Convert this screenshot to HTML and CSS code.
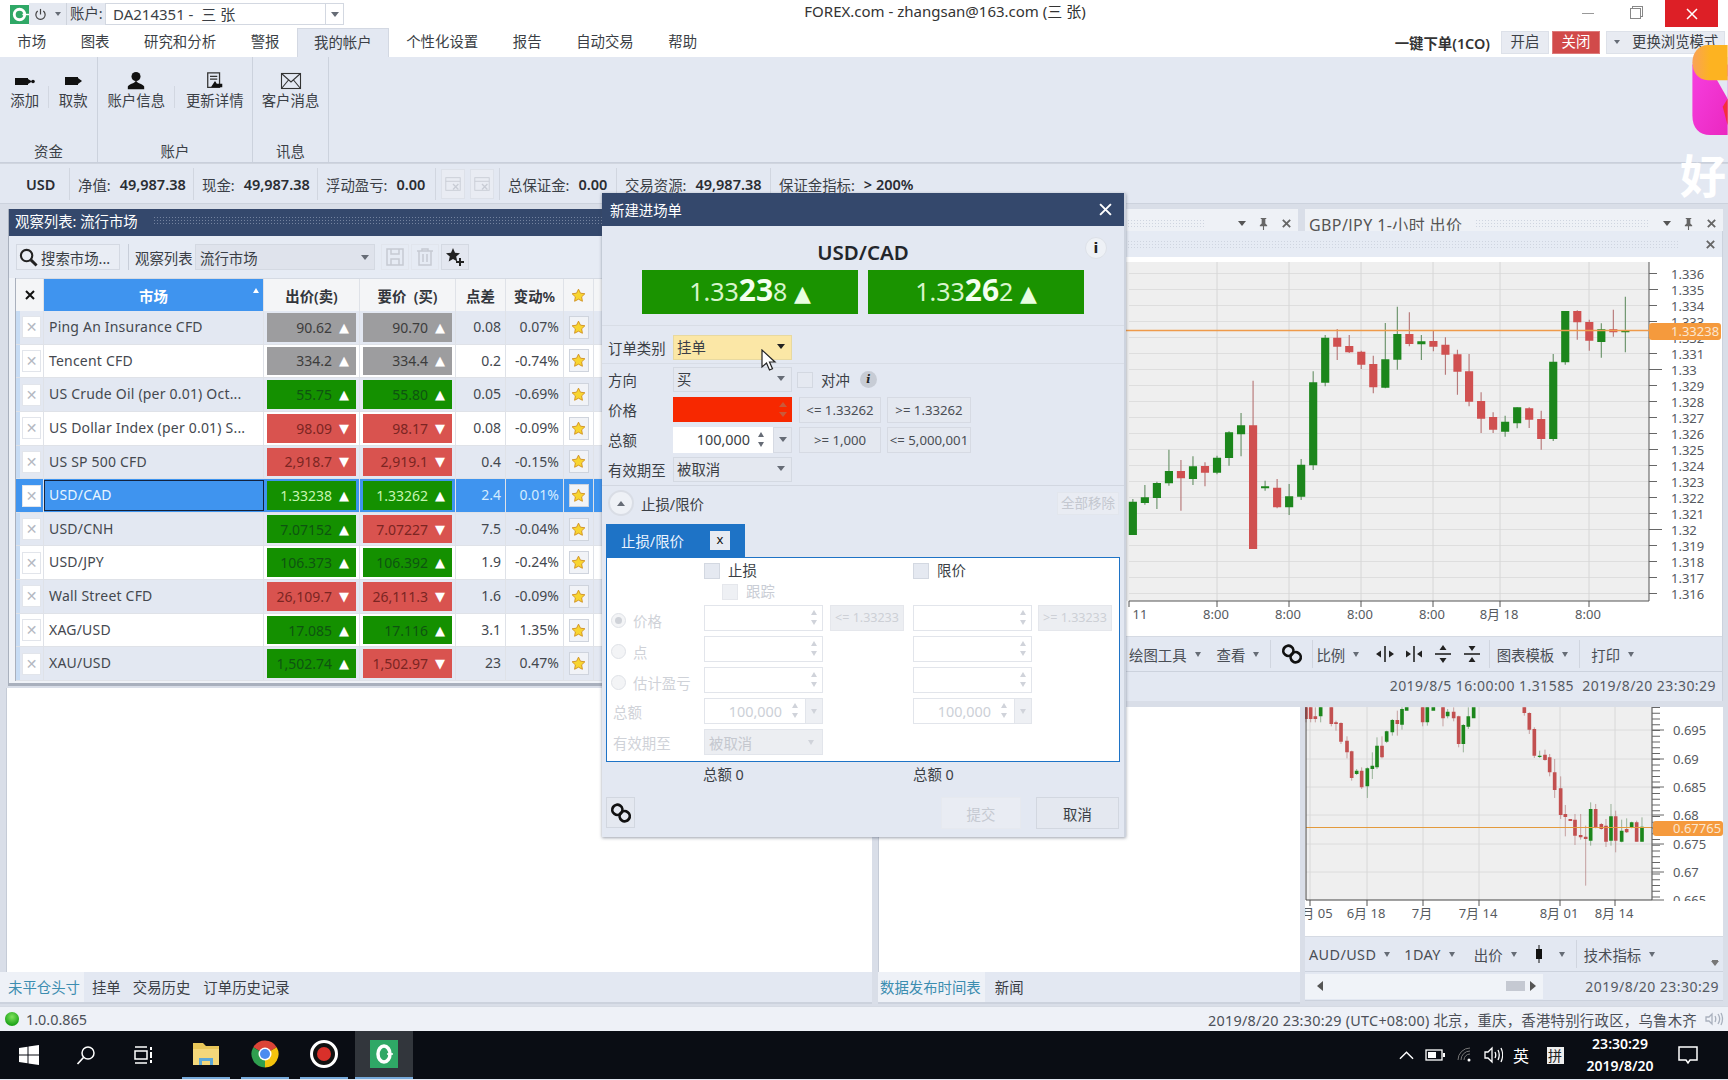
FILE: index.html
```html
<!DOCTYPE html>
<html lang="zh-CN">
<head>
<meta charset="utf-8">
<title>FOREX.com</title>
<link rel="stylesheet" href="styles.css">
</head>
<body>
<svg class="sprite" aria-hidden="true">
  <defs>
    <symbol id="i-star" viewBox="0 0 20 20"><path d="M10 1.5l2.6 5.4 5.9.8-4.3 4.1 1 5.9L10 14.9l-5.2 2.8 1-5.9L1.5 7.7l5.9-.8z"/></symbol>
    <symbol id="i-x" viewBox="0 0 12 12"><path d="M2 2l8 8M10 2l-8 8" fill="none" stroke="currentColor" stroke-width="2"/></symbol>
    <symbol id="i-link" viewBox="0 0 24 24"><g fill="none" stroke="currentColor" stroke-width="3"><rect x="2.5" y="3" width="11" height="11" rx="5.5" transform="rotate(35 8 8.5)"/><rect x="10.5" y="10" width="11" height="11" rx="5.5" transform="rotate(35 16 15.5)"/></g></symbol>
    <symbol id="i-pin" viewBox="0 0 12 14"><path d="M3 1h6v1H8v5l2 2v1H6.6v4H5.4v-4H2V9l2-2V2H3z"/></symbol>
    <symbol id="i-hsq" viewBox="0 0 20 20"><path d="M10 2v16" stroke="currentColor" stroke-width="1.6"/><path d="M1 10l5-3.5v7zM19 10l-5-3.5v7z"/></symbol>
    <symbol id="i-hex" viewBox="0 0 20 20"><path d="M10 2v16" stroke="currentColor" stroke-width="1.6"/><path d="M7 10L2 6.500v7zM13 10l5-3.500v7z"/></symbol>
    <symbol id="i-vsq" viewBox="0 0 20 20"><path d="M2 10h16" stroke="currentColor" stroke-width="1.6"/><path d="M10 1l3.500 5h-7zM10 19l3.500-5h-7z"/></symbol>
    <symbol id="i-vex" viewBox="0 0 20 20"><path d="M2 10h16" stroke="currentColor" stroke-width="1.6"/><path d="M10 7L6.500 2h7zM10 13l3.500 5h-7z"/></symbol>
    <symbol id="i-tray" viewBox="0 0 20 20"><g fill="none" stroke="currentColor" stroke-width="1"><rect x="2" y="3" width="16" height="14"/><path d="M2 7h16"/></g><path d="M10 10l6 6M16 10l-6 6" stroke="currentColor" stroke-width="1.500"/></symbol>
  </defs>
</svg>

<div class="app">

  <header class="titlebar">
    <div class="tb-left">
      <svg class="logo" viewBox="0 0 20 20"><rect width="20" height="20" fill="#2fa866"/><circle cx="10" cy="10" r="5.500" fill="none" stroke="#fff" stroke-width="3"/><path d="M13 10h7" stroke="#fff" stroke-width="1.500"/></svg>
      <div class="power">
        <svg class="power-i" viewBox="0 0 14 14"><path d="M7 1v6" stroke="#444" stroke-width="1.300"/><path d="M4 3.300a5 5 0 1 0 6 0" fill="none" stroke="#444" stroke-width="1.300"/></svg>
        <i class="caret"></i>
      </div>
      <span class="acct-label">账户:</span>
      <div class="acct-input"><span>DA214351 -&nbsp; 三 张</span><b class="acct-drop"><i class="caret"></i></b></div>
    </div>
    <div class="tb-title">FOREX.com - zhangsan@163.com (三 张)</div>
    <div class="tb-win">
      <span class="win-min"></span>
      <span class="win-max"></span>
      <span class="win-close"><svg viewBox="0 0 12 12"><path d="M1 1l10 10M11 1L1 11" stroke="#fff" stroke-width="1.500"/></svg></span>
    </div>
  </header>

  <nav class="rtabs">
    <a class="rtab">市场</a><a class="rtab">图表</a><a class="rtab">研究和分析</a><a class="rtab">警报</a><a class="rtab active">我的帐户</a><a class="rtab">个性化设置</a><a class="rtab">报告</a><a class="rtab">自动交易</a><a class="rtab">帮助</a>
    <div class="oneclick">
      <strong>一键下单(1CO)</strong>
      <button class="oc-btn">开启</button>
      <button class="oc-btn oc-off">关闭</button>
      <button class="oc-btn oc-mode"><i class="caret"></i><span>更换浏览模式</span></button>
    </div>
  </nav>

  <section class="ribbon">
    <div class="rgroup g1">
      <div class="rbtns">
        <div class="rbtn w50 sep">
          <svg class="ricon" viewBox="0 0 24 20"><rect x="2" y="7" width="13" height="7" fill="#111"/><path d="M15 8l4 2.500-4 2.500z" fill="#111"/><circle cx="20" cy="10.500" r="1.800" fill="#111"/></svg>
          <span>添加</span>
        </div>
        <div class="rbtn w48">
          <svg class="ricon" viewBox="0 0 24 20"><rect x="4" y="6" width="13" height="8" fill="#111"/><path d="M17 7l4 3-4 3z" fill="#111"/></svg>
          <span>取款</span>
        </div>
      </div>
      <div class="rlabel">资金</div>
    </div>
    <div class="rgroup g2">
      <div class="rbtns">
        <div class="rbtn w77 sep">
          <svg class="ricon" viewBox="0 0 24 22"><circle cx="12" cy="6" r="5" fill="#111"/><path d="M12 10c-1 4-7 4-9 7v3h18v-3c-2-3-8-3-9-7z" fill="#111"/></svg>
          <span>账户信息</span>
        </div>
        <div class="rbtn w78">
          <svg class="ricon" viewBox="0 0 22 22"><g fill="none" stroke="#333" stroke-width="1.400"><path d="M3 2h13v16H3zM5.500 6h8M5.500 9h8"/></g><path d="M7 17l4-6 2 3h6v4H7z" fill="#111"/></svg>
          <span>更新详情</span>
        </div>
      </div>
      <div class="rlabel">账户</div>
    </div>
    <div class="rgroup g3">
      <div class="rbtns">
        <div class="rbtn w76">
          <svg class="ricon" viewBox="0 0 24 20"><g fill="none" stroke="#333" stroke-width="1.100"><rect x="2.500" y="2.500" width="19" height="15"/><path d="M2.500 2.500L12 11l9.500-8.500M2.500 17.500l7-8.500M21.500 17.500l-7-8.500"/></g></svg>
          <span>客户消息</span>
        </div>
      </div>
      <div class="rlabel">讯息</div>
    </div>
  </section>

  <section class="acct">
    <div class="acell c-usd"><b>USD</b></div>
    <div class="acell c-a"><span>净值:</span><b>49,987.38</b></div>
    <div class="acell c-b"><span>现金:</span><b>49,987.38</b></div>
    <div class="acell c-c"><span>浮动盈亏:</span><b>0.00</b></div>
    <div class="acell c-icons">
      <span class="ghost-btn"><svg><use href="#i-tray"/></svg></span>
      <span class="ghost-btn"><svg><use href="#i-tray"/></svg></span>
    </div>
    <div class="acell c-d"><span>总保证金:</span><b>0.00</b></div>
    <div class="acell c-e"><span>交易资源:</span><b>49,987.38</b></div>
    <div class="acell c-f"><span>保证金指标:</span><b>&gt; 200%</b></div>
  </section>

  <main class="main">
    <div class="col-left">
      <section class="watch">
        <div class="watch-title"><span>观察列表: 流行市场</span><i class="dots"></i></div>
        <div class="watch-tools">
          <button class="search-btn">
            <svg viewBox="0 0 20 20"><circle cx="8" cy="8" r="6" fill="none" stroke="#222" stroke-width="2.200"/><path d="M12.500 12.500l6 6" stroke="#222" stroke-width="3"/></svg>
            <span>搜索市场...</span>
          </button>
          <span class="tool-sep"></span>
          <span class="tool-label">观察列表</span>
          <div class="tool-combo"><span>流行市场</span><i class="caret"></i></div>
          <span class="tool-ic off"><svg viewBox="0 0 20 20"><g fill="none" stroke="#c6cad2" stroke-width="1.500"><path d="M2 2h16v16H2zM6 2v5h8V2M6 18v-6h8v6"/></g></svg></span>
          <span class="tool-ic off"><svg viewBox="0 0 20 20"><g fill="none" stroke="#c6cad2" stroke-width="1.500"><path d="M2 4h16M7 4V2h6v2M4 4v14h12V4M8 7v8M12 7v8"/></g></svg></span>
          <span class="tool-ic"><svg viewBox="0 0 20 20"><path d="M8 1l2 4.800 5 .5-3.800 3.300 1.100 5L8 11.900l-4.300 2.700 1.100-5L1 6.300l5-.5z" fill="#222"/><path d="M15 11v8M11 15h8" stroke="#222" stroke-width="2"/></svg></span>
        </div>
        <div class="grid-wrap">
          <div class="ghead">
            <div class="gh-x"><svg><use href="#i-x"/></svg></div>
            <div class="gh-market">市场<i class="sort"></i></div>
            <div>出价(卖)</div>
            <div>要价&nbsp; (买)</div>
            <div>点差</div>
            <div>变动%</div>
            <div class="gh-star"><svg class="star"><use href="#i-star"/></svg></div>
            <div></div>
          </div>
          <div class="grow">
            <div class="gx"><span class="xbox">✕</span></div><div class="gname">Ping An Insurance CFD</div>
            <div class="gp"><span class="price gray">90.62<em>▲</em></span></div><div class="gp"><span class="price gray">90.70<em>▲</em></span></div>
            <div class="gnum">0.08</div><div class="gnum">0.07%</div><div class="gstar"><span class="starbox"><svg class="star"><use href="#i-star"/></svg></span></div><div></div>
          </div>
          <div class="grow">
            <div class="gx"><span class="xbox">✕</span></div><div class="gname">Tencent CFD</div>
            <div class="gp"><span class="price gray">334.2<em>▲</em></span></div><div class="gp"><span class="price gray">334.4<em>▲</em></span></div>
            <div class="gnum">0.2</div><div class="gnum">-0.74%</div><div class="gstar"><span class="starbox"><svg class="star"><use href="#i-star"/></svg></span></div><div></div>
          </div>
          <div class="grow">
            <div class="gx"><span class="xbox">✕</span></div><div class="gname">US Crude Oil (per 0.01) Oct...</div>
            <div class="gp"><span class="price up">55.75<em>▲</em></span></div><div class="gp"><span class="price up">55.80<em>▲</em></span></div>
            <div class="gnum">0.05</div><div class="gnum">-0.69%</div><div class="gstar"><span class="starbox"><svg class="star"><use href="#i-star"/></svg></span></div><div></div>
          </div>
          <div class="grow">
            <div class="gx"><span class="xbox">✕</span></div><div class="gname">US Dollar Index (per 0.01) S...</div>
            <div class="gp"><span class="price down">98.09<em>▼</em></span></div><div class="gp"><span class="price down">98.17<em>▼</em></span></div>
            <div class="gnum">0.08</div><div class="gnum">-0.09%</div><div class="gstar"><span class="starbox"><svg class="star"><use href="#i-star"/></svg></span></div><div></div>
          </div>
          <div class="grow">
            <div class="gx"><span class="xbox">✕</span></div><div class="gname">US SP 500 CFD</div>
            <div class="gp"><span class="price down">2,918.7<em>▼</em></span></div><div class="gp"><span class="price down">2,919.1<em>▼</em></span></div>
            <div class="gnum">0.4</div><div class="gnum">-0.15%</div><div class="gstar"><span class="starbox"><svg class="star"><use href="#i-star"/></svg></span></div><div></div>
          </div>
          <div class="grow row-sel">
            <div class="gx"><span class="xbox">✕</span></div><div class="gname">USD/CAD</div>
            <div class="gp"><span class="price up">1.33238<em>▲</em></span></div><div class="gp"><span class="price up">1.33262<em>▲</em></span></div>
            <div class="gnum">2.4</div><div class="gnum">0.01%</div><div class="gstar"><span class="starbox"><svg class="star"><use href="#i-star"/></svg></span></div><div></div>
          </div>
          <div class="grow">
            <div class="gx"><span class="xbox">✕</span></div><div class="gname">USD/CNH</div>
            <div class="gp"><span class="price up">7.07152<em>▲</em></span></div><div class="gp"><span class="price down">7.07227<em>▼</em></span></div>
            <div class="gnum">7.5</div><div class="gnum">-0.04%</div><div class="gstar"><span class="starbox"><svg class="star"><use href="#i-star"/></svg></span></div><div></div>
          </div>
          <div class="grow">
            <div class="gx"><span class="xbox">✕</span></div><div class="gname">USD/JPY</div>
            <div class="gp"><span class="price up">106.373<em>▲</em></span></div><div class="gp"><span class="price up">106.392<em>▲</em></span></div>
            <div class="gnum">1.9</div><div class="gnum">-0.24%</div><div class="gstar"><span class="starbox"><svg class="star"><use href="#i-star"/></svg></span></div><div></div>
          </div>
          <div class="grow">
            <div class="gx"><span class="xbox">✕</span></div><div class="gname">Wall Street CFD</div>
            <div class="gp"><span class="price down">26,109.7<em>▼</em></span></div><div class="gp"><span class="price down">26,111.3<em>▼</em></span></div>
            <div class="gnum">1.6</div><div class="gnum">-0.09%</div><div class="gstar"><span class="starbox"><svg class="star"><use href="#i-star"/></svg></span></div><div></div>
          </div>
          <div class="grow">
            <div class="gx"><span class="xbox">✕</span></div><div class="gname">XAG/USD</div>
            <div class="gp"><span class="price up">17.085<em>▲</em></span></div><div class="gp"><span class="price up">17.116<em>▲</em></span></div>
            <div class="gnum">3.1</div><div class="gnum">1.35%</div><div class="gstar"><span class="starbox"><svg class="star"><use href="#i-star"/></svg></span></div><div></div>
          </div>
          <div class="grow">
            <div class="gx"><span class="xbox">✕</span></div><div class="gname">XAU/USD</div>
            <div class="gp"><span class="price up">1,502.74<em>▲</em></span></div><div class="gp"><span class="price down">1,502.97<em>▼</em></span></div>
            <div class="gnum">23</div><div class="gnum">0.47%</div><div class="gstar"><span class="starbox"><svg class="star"><use href="#i-star"/></svg></span></div><div></div>
          </div>
        </div>
      </section>
      <div class="blank"></div>
      <div class="btabs">
        <span class="btab active">未平仓头寸</span><span class="btab">挂单</span><span class="btab">交易历史</span><span class="btab">订单历史记录</span>
      </div>
    </div>

    <div class="col-right">
      <div class="ctabs">
        <div class="ctab ct1"><i class="dots light"></i><i class="caret"></i><svg class="pin"><use href="#i-pin"/></svg><svg class="cx"><use href="#i-x"/></svg></div>
        <div class="ctab ct2"><span>GBP/JPY 1-小时 出价</span><i class="dots light"></i><i class="caret"></i><svg class="pin"><use href="#i-pin"/></svg><svg class="cx"><use href="#i-x"/></svg></div>
      </div>

      <section class="chartwin">
        <div class="cw-title"><i class="dots light"></i><svg class="cx"><use href="#i-x"/></svg></div>
        <svg class="chart-a" viewBox="1120 258 600 379">
          <rect x="1120" y="258" width="600" height="379" fill="#fff"/>
          <rect x="1120" y="263" width="527" height="339" fill="#efefef"/>
          <line x1="1387" x2="1387" y1="274" y2="596" stroke="#dedede" stroke-width="520" stroke-dasharray="1 15"/>
          <path d="M1215 263V602M1287 263V602M1359 263V602M1431 263V602M1498 263V602M1587 263V602" stroke="#d6d6d6"/>
          <path d="M1127 602H1647M1647 263V602M1127 602V608" stroke="#555" fill="none"/>
          <line x1="1651" x2="1651" y1="274" y2="596" stroke="#666" stroke-width="8" stroke-dasharray="1 15"/>
          <path d="M1647 290.500h9M1647 370.500h13M1647 450.500h9M1647 530.500h13" stroke="#666"/>
          <path d="M1215 602v6M1287 602v6M1359 602v6M1431 602v6M1498 602v6M1587 602v6" stroke="#555"/>
          <g transform="translate(1120 200) scale(.3878 .33333)" fill="none">
            <path stroke="#6c946c" stroke-width="3" d="M28 900V1008M59 858V917M90 848V930M121 752V860M183 772V858M245 770V826M276 697V800M307 642V772M369 845V875M431 855V948M462 780V903M493 517V813M524 408V562M679 372V568M710 323V512M772 408V483M988 650V713M1019 625V688M1112 465V726M1143 336V497M1236 373V476M1298 293V460"/>
            <path stroke="#b87a7a" stroke-width="3" d="M152 783V935M214 790V862M338 545V1050M400 840V928M555 390V483M586 408V462M617 455V510M648 470V583M741 340V442M803 395V457M834 415V527M865 452V587M895 465V622M926 580V702M957 640V702M1050 625V687M1081 635V752M1174 334V422M1205 362V455M1267 332V413"/>
            <path stroke="#1c861c" stroke-width="21" d="M28 908V1008M59 895V912M90 852V897M121 816V853M183 802V840M245 776V821M276 700V777M307 679V706M369 862V868M431 892V925M462 797V893M493 550V799M524 416V551M679 481V566M710 405V482M772 427V436M988 668V698M1019 625V673M1112 488V720M1143 336V490M1236 391V429M1298 396V400"/>
            <path stroke="#d05050" stroke-width="21" d="M152 816V838M214 801V821M338 679V1050M400 866V925M555 416V443M586 441V460M617 458V497M648 495V565M741 405V435M803 426V443M834 437V467M865 466V518M895 517V608M926 606V659M957 654V692M1050 628V662M1081 660V720M1174 336V370M1205 369V425M1267 391V400"/>
          </g>
          <line x1="1120" x2="1647" y1="331.500" y2="331.500" stroke="#ef9a4a" stroke-width="1.500"/>
          <g class="axis">
            <text x="1669" y="280">1.336</text><text x="1669" y="296">1.335</text><text x="1669" y="312">1.334</text><text x="1669" y="328">1.333</text><text x="1669" y="344">1.332</text><text x="1669" y="360">1.331</text><text x="1669" y="376">1.33</text><text x="1669" y="392">1.329</text><text x="1669" y="408">1.328</text><text x="1669" y="424">1.327</text><text x="1669" y="440">1.326</text><text x="1669" y="456">1.325</text><text x="1669" y="472">1.324</text><text x="1669" y="488">1.323</text><text x="1669" y="504">1.322</text><text x="1669" y="520">1.321</text><text x="1669" y="536">1.32</text><text x="1669" y="552">1.319</text><text x="1669" y="568">1.318</text><text x="1669" y="584">1.317</text><text x="1669" y="600">1.316</text>
          </g>
          <rect x="1647" y="324" width="72" height="17" rx="3" fill="#f59a3d"/>
          <text class="axis-tag" x="1669" y="337">1.33238</text>
          <g class="axis" text-anchor="middle">
            <text x="1138" y="620">11</text><text x="1214" y="620">8:00</text><text x="1286" y="620">8:00</text><text x="1358" y="620">8:00</text><text x="1430" y="620">8:00</text><text x="1497" y="620">8月 18</text><text x="1586" y="620">8:00</text>
          </g>
        </svg>
        <div class="ctool top">
          <span class="ct w57">绘图工具</span><i class="caret"></i>
          <span class="ct ml16">查看</span><i class="caret"></i>
          <span class="cs"></span>
          <svg class="tlink"><use href="#i-link"/></svg>
          <span class="cs s2"></span>
          <span class="ct">比例</span><i class="caret"></i>
          <svg class="tico first"><use href="#i-hsq"/></svg><svg class="tico"><use href="#i-hex"/></svg><svg class="tico"><use href="#i-vsq"/></svg><svg class="tico"><use href="#i-vex"/></svg>
          <span class="cs s3"></span>
          <span class="ct">图表模板</span><i class="caret"></i>
          <span class="cs s5"></span>
          <span class="ct">打印</span><i class="caret"></i>
        </div>
        <div class="cstatus">2019/8/5 16:00:00 1.31585&nbsp;&nbsp;2019/8/20 23:30:29</div>
      </section>

      <div class="bottom-row">
        <section class="midpane">
          <div class="blank"></div>
          <div class="btabs">
            <span class="btab active first">数据发布时间表</span><span class="btab">新闻</span>
          </div>
        </section>
        <section class="audpane">
          <svg class="chart-b" viewBox="1305 708 418 229">
            <rect x="1305" y="708" width="418" height="229" fill="#fff"/>
            <rect x="1306" y="708" width="346" height="193" fill="#efefef"/>
            <path d="M1306 731H1652M1306 760H1652M1306 788H1652M1306 816H1652M1306 845H1652M1306 873H1652" stroke="#dcdcdc"/>
            <path d="M1310 708V901M1367 708V901M1423 708V901M1479 708V901M1560 708V901M1615 708V901" stroke="#d8d8d8"/>
            <g transform="translate(1300 690) scale(.33333)" fill="none">
              <path stroke="#6c946c" stroke-width="2" d="M62 55V100M170 240V258M202 235V327M217 190V270M231 145V240M260 125V162M277 90V140M306 55V122M382 55V110M443 60V88M490 105V190M505 55V120M719 185V207M872 340V470M933 345V470M965 392V460M980 388V432M995 398V418M1026 385V458"/>
              <path stroke="#b07878" stroke-width="2" d="M18 55V100M32 55V100M46 55V100M94 55V112M108 95V125M123 100V165M141 142V208M155 185V275M185 235V300M246 142V208M292 65V140M368 55V112M429 55V112M461 55V97M476 80V175M673 55V80M688 70V135M703 115V207M735 182V215M749 195V262M764 210V327M782 262V390M796 348V442M825 375V468M842 375V452M857 410V590M887 345V418M904 402V422M918 390V474M947 365V490M1010 395V458"/>
              <path stroke="#1c861c" stroke-width="11" d="M62 55V82M170 245V255M202 238V292M217 230V240M231 170V235M260 127V158M277 93V130M306 60V107M320 55V65M382 55V100M400 55V65M443 68V82M490 108V165M505 82V113M521 55V88M719 200V204M872 360V455M933 382V455M965 425V458M995 400V415M1026 413V458"/>
              <path stroke="#c25050" stroke-width="11" d="M18 55V90M32 55V90M46 82V90M94 55V105M108 100V105M123 102V158M141 155V190M155 187V267M185 245V295M246 170V205M292 93V105M368 55V100M429 55V88M461 68V88M476 82V165M673 55V72M688 72V122M703 120V200M735 197V213M749 205V250M764 250V303M782 298V378M796 375V384M811 390V396M825 392V440M842 438V445M857 443V450M887 360V415M904 405V420M918 410V458M947 382V455M980 420V430M1010 400V458"/>
            </g>
            <line x1="1306" x2="1652" y1="828.500" y2="828.500" stroke="#e39a3c" stroke-width="1.200"/>
            <path d="M1652 708V901M1306 708V901" stroke="#444" fill="none"/>
            <path d="M1306 901H1652" stroke="#444"/>
            <line x1="1656" x2="1656" y1="708" y2="901" stroke="#666" stroke-width="8" stroke-dasharray="1 4.740"/>
            <path d="M1652 731h12M1652 760h12M1652 788h12M1652 816h12M1652 845h12M1652 873h12M1652 901h12" stroke="#666"/>
            <g class="axis">
              <text x="1673" y="736">0.695</text><text x="1673" y="765">0.69</text><text x="1673" y="793">0.685</text><text x="1673" y="821">0.68</text><text x="1673" y="850">0.675</text><text x="1673" y="878">0.67</text><text x="1673" y="906">0.665</text>
            </g>
            <rect x="1665" y="902" width="58" height="35" fill="#fff"/>
            <rect x="1653" y="822" width="70" height="15" rx="3" fill="#f59a3d"/>
            <text class="axis-tag" x="1673" y="834">0.67765</text>
            <g class="axis" text-anchor="middle">
              <text x="1317" y="919">月 05</text><text x="1366" y="919">6月 18</text><text x="1422" y="919">7月</text><text x="1478" y="919">7月 14</text><text x="1559" y="919">8月 01</text><text x="1614" y="919">8月 14</text>
            </g>
            <path d="M1310 901v6M1367 901v6M1423 901v6M1479 901v6M1560 901v6M1615 901v6" stroke="#555"/>
          </svg>
          <div class="ctool aud">
            <span class="ct latin">AUD/USD</span><i class="caret"></i>
            <span class="ct latin ml15">1DAY</span><i class="caret"></i>
            <span class="ct ml19">出价</span><i class="caret"></i>
            <svg class="candle" viewBox="0 0 8 18"><path d="M4 0v18" stroke="#111"/><rect x="1" y="4" width="6" height="10" fill="#111"/></svg><i class="caret"></i>
            <span class="cs s4"></span>
            <span class="ct">技术指标</span><i class="caret"></i>
            <i class="more"></i>
          </div>
          <div class="aud-status">
            <div class="scroll"><i class="sl"></i><b class="thumb"></b><i class="sr"></i></div>
            <span>2019/8/20 23:30:29</span>
          </div>
        </section>
      </div>
    </div>
  </main>

  <footer class="status">
    <i class="led"></i><span class="ver">1.0.0.865</span>
    <span class="tz">2019/8/20 23:30:29 (UTC+08:00) 北京，重庆，香港特别行政区，乌鲁木齐</span>
    <svg class="speaker" viewBox="0 0 20 16"><g fill="none" stroke="#a9b0bd" stroke-width="1.300"><path d="M2 6h3l3-3v10l-3-3H2zM11 5c1 2 1 4 0 6M14 3c2 3 2 7 0 10M17 2c2 4 2 8 0 12"/></g></svg>
  </footer>

  <div class="taskbar">
    <div class="tk"><svg viewBox="0 0 20 20"><path d="M0 3l8.500-1.200V9.500H0zM9.500 1.600L20 0v9.500H9.500zM0 10.500h8.500v7.700L0 17zM9.500 10.500H20V20L9.500 18.400z" fill="#fff"/></svg></div>
    <div class="tk"><svg viewBox="0 0 20 20"><circle cx="12" cy="8" r="6" fill="none" stroke="#fff" stroke-width="1.500"/><path d="M7.500 12.500L1.500 19" stroke="#fff" stroke-width="1.700"/></svg></div>
    <div class="tk tk-r"><svg viewBox="0 0 20 20"><g fill="none" stroke="#fff" stroke-width="1.500"><path d="M1 2h12M1 18h12M1 6h12v8H1z"/><path d="M17 2v3M17 7v6M17 15v3" stroke-width="2"/></g></svg></div>
    <div class="tk-app">
      <svg viewBox="0 0 28 26"><path d="M1 2h10l3 3h13v19H1z" fill="#e8c659"/><path d="M1 8h26v16H1z" fill="#f4d77a"/><path d="M7 24v-7h14v7h-3v-4h-8v4z" fill="#5da8d8"/></svg>
    </div>
    <div class="tk-app">
      <svg viewBox="0 0 28 28"><path d="M14 14L2.300 7.250A13.500 13.500 0 0 1 25.700 7.250z" fill="#db4437"/><path d="M14 14L25.700 7.250A13.500 13.500 0 0 1 14 27.500z" fill="#f4c20d"/><path d="M14 14V27.500A13.500 13.500 0 0 1 2.300 7.250z" fill="#2f9e4f"/><circle cx="14" cy="14" r="6.500" fill="#fff"/><circle cx="14" cy="14" r="5" fill="#4a8cf0"/></svg>
    </div>
    <div class="tk-app">
      <svg viewBox="0 0 28 28"><circle cx="14" cy="14" r="12.500" fill="#111" stroke="#fff" stroke-width="3"/><circle cx="14" cy="14" r="7" fill="#d9302a"/></svg>
    </div>
    <div class="tk-app active">
      <svg viewBox="0 0 28 28"><rect width="28" height="28" fill="#2fa866"/><ellipse cx="14" cy="14" rx="6" ry="8" fill="none" stroke="#fff" stroke-width="3.500"/><path d="M17 14h6" stroke="#fff" stroke-width="1.500"/></svg>
    </div>
    <div class="tray">
      <span class="tr t1"><svg viewBox="0 0 16 10"><path d="M1 9l7-7 7 7" fill="none" stroke="#fff" stroke-width="1.500"/></svg></span>
      <span class="tr t2"><svg viewBox="0 0 20 12"><rect x="1" y="1" width="16" height="10" fill="none" stroke="#fff" stroke-width="1.300"/><rect x="3" y="3" width="8" height="6" fill="#fff"/><rect x="18" y="4" width="2" height="4" fill="#fff"/></svg></span>
      <span class="tr t3"><svg viewBox="0 0 16 16"><g fill="none" stroke="#777"><path d="M1 13A12 12 0 0 1 13 1M4 13A9 9 0 0 1 13 4M7 13a6 6 0 0 1 6-6"/></g><circle cx="12" cy="13" r="1.500" fill="#fff"/></svg></span>
      <span class="tr t4"><svg viewBox="0 0 20 18"><g fill="none" stroke="#fff" stroke-width="1.300"><path d="M2 6h3l4-4v14l-4-4H2zM12 6c1 2 1 4 0 6M15 4c1.500 3 1.500 7 0 10M18 2c2 4 2 10 0 14"/></g></svg></span>
      <span class="tr t5">英</span>
      <span class="tr t6"><b>拼</b></span>
      <span class="tr clock"><span>23:30:29</span><span>2019/8/20</span></span>
      <span class="tr t7"><svg viewBox="0 0 20 20"><path d="M1 2h18v13h-7l-2 3-2-3H1z" fill="none" stroke="#fff" stroke-width="1.500"/></svg></span>
    </div>
  </div>

  <section class="dialog">
    <div class="d-head"><span>新建进场单</span><svg class="d-close" viewBox="0 0 12 12"><path d="M1 1l10 10M11 1L1 11" stroke="#fff" stroke-width="1.800"/></svg></div>
    <div class="d-symbol"><strong>USD/CAD</strong><span class="d-info">i</span></div>
    <div class="d-prices">
      <div class="d-price">1.33<b>23</b>8 <em>▲</em></div>
      <div class="d-price">1.33<b>26</b>2 <em>▲</em></div>
    </div>
    <div class="d-type">
      <label>订单类别</label>
      <div class="sel hot"><span>挂单</span><i class="caret dark"></i></div>
    </div>
    <div class="d-form">
      <div class="frow">
        <label>方向</label>
        <div class="sel"><span>买</span><i class="caret"></i></div>
        <span class="chk ml8"></span><span class="hedge">对冲</span><span class="info-s">i</span>
      </div>
      <div class="frow">
        <label>价格</label>
        <div class="redbox"><i class="caret up-t"></i><i class="caret"></i></div>
        <span class="lim ml7 w82">&lt;= 1.33262</span><span class="lim ml6 w84">&gt;= 1.33262</span>
      </div>
      <div class="frow">
        <label>总额</label>
        <div class="amount"><span class="val">100,000</span><span class="spn"><i class="caret up-t"></i><i class="caret"></i></span><b class="drop"><i class="caret"></i></b></div>
        <span class="lim ml7 w82">&gt;= 1,000</span><span class="lim ml6 w84">&lt;= 5,000,001</span>
      </div>
      <div class="frow">
        <label>有效期至</label>
        <div class="sel"><span>被取消</span><i class="caret"></i></div>
      </div>
    </div>
    <div class="d-sl">
      <span class="circle"><i class="caret up-t"></i></span><span class="sl-txt">止损/限价</span>
      <span class="remove">全部移除</span>
    </div>
    <div class="d-tabs"><div class="d-tab"><span>止损/限价</span><b>x</b></div></div>
    <div class="d-panel">
      <div class="pc2 ck"><span class="chk"></span><span>止损</span></div>
      <div class="pc4 ck"><span class="chk"></span><span>限价</span></div>
      <div class="pc2 ck off indent"><span class="chk"></span><span>跟踪</span></div>

      <div class="pc1 rd off"><i class="radio on"></i><span>价格</span></div>
      <div class="pc2 inp"><i class="caret up-t"></i><i class="caret"></i></div>
      <div class="pc3 dis-btn">&lt;= 1.33233</div>
      <div class="pc4 inp"><i class="caret up-t"></i><i class="caret"></i></div>
      <div class="pc5 dis-btn">&gt;= 1.33233</div>

      <div class="pc1 rd off"><i class="radio"></i><span>点</span></div>
      <div class="pc2 inp"><i class="caret up-t"></i><i class="caret"></i></div>
      <div class="pc4 inp"><i class="caret up-t"></i><i class="caret"></i></div>

      <div class="pc1 rd off"><i class="radio"></i><span>估计盈亏</span></div>
      <div class="pc2 inp"><i class="caret up-t"></i><i class="caret"></i></div>
      <div class="pc4 inp"><i class="caret up-t"></i><i class="caret"></i></div>

      <div class="pc1 rd off plain"><span>总额</span></div>
      <div class="pc2 inp amt"><span>100,000</span><i class="caret up-t"></i><i class="caret"></i><b class="drop"><i class="caret"></i></b></div>
      <div class="pc4 inp amt"><span>100,000</span><i class="caret up-t"></i><i class="caret"></i><b class="drop"><i class="caret"></i></b></div>

      <div class="pc1 rd off plain"><span>有效期至</span></div>
      <div class="pc2 inp dsel"><span>被取消</span><i class="caret"></i></div>
    </div>
    <div class="d-totals"><span>总额 0</span><span>总额 0</span></div>
    <div class="d-foot">
      <button class="linkbtn"><svg><use href="#i-link"/></svg></button>
      <button class="fbtn dis">提交</button>
      <button class="fbtn">取消</button>
    </div>
  </section>

  <svg class="cursor" viewBox="0 0 16 24"><path d="M1 1v17l4.500-4 3 7 3-1.300-3-6.700H14z" fill="#fff" stroke="#222" stroke-width="1.200"/></svg>

  <div class="mark">
    <svg viewBox="0 0 36 92"><defs><linearGradient id="wm" x1="0" y1="0" x2="1" y2="1"><stop offset="0" stop-color="#f73fe0"/><stop offset="1" stop-color="#ea28c0"/></linearGradient><linearGradient id="wy" x1="0" y1="0" x2="1" y2="0"><stop offset="0" stop-color="#f9a258"/><stop offset=".5" stop-color="#fdb321"/></linearGradient></defs><path d="M0 20h36v72H18C7 92 0 85 0 72z" fill="url(#wm)"/><path d="M23 32H36V55z" fill="#e3e8f2"/><path d="M36 55v27l-5-19z" fill="#f5303a"/><path d="M16 0h20v36H16C6 36 0 28 0 18S6 0 16 0z" fill="url(#wy)"/></svg>
    <span>好</span>
  </div>
</div>
</body>
</html>
```

FILE: styles.css
```css
* { box-sizing: border-box; }
html, body { margin: 0; padding: 0; }
body {
  font-family: "Noto Sans", "Noto Sans CJK SC", sans-serif;
  font-size: 14.400px;
  color: #3b3f46;
  background: #e3e8f2;
}
.sprite { position: absolute; width: 0; height: 0; }
i, em { font-style: normal; }
button { font: inherit; color: inherit; padding: 0; margin: 0; }

.app {
  position: relative;
  width: 1728px;
  height: 1080px;
  overflow: hidden;
  display: flex;
  flex-direction: column;
}

.caret {
  display: inline-block;
  width: 0;
  height: 0;
  border-left: 4px solid transparent;
  border-right: 4px solid transparent;
  border-top: 5px solid #666c76;
}
.caret.dark { border-top-color: #222; }
.caret.up-t { border-top: 0; border-bottom: 5px solid #666c76; }

.dots {
  display: block;
  background-image: radial-gradient(#74839f 0.7px, transparent 0.9px);
  background-size: 3px 3px;
}
.dots.light { background-image: radial-gradient(#cfd5e0 0.8px, transparent 1px); }

/* title bar */
.titlebar { height: 28px; background: #fff; display: flex; align-items: flex-start; flex: none; }
.tb-left { width: 345px; display: flex; align-items: center; padding: 3px 0 0 10px; height: 25px; }
.logo { width: 19px; height: 19px; }
.power { width: 37px; height: 22px; background: #e5e9f1; display: flex; align-items: center; gap: 8px; padding-left: 5px; }
.power-i { width: 13px; height: 13px; }
.power .caret { border-width: 3px; border-top-width: 4px; }
.acct-label { width: 39px; padding-left: 3px; background: #e5e9f1; height: 22px; line-height: 21px; border-left: 1px solid #cfd4dd; white-space: nowrap; }
.acct-input { width: 239px; height: 22px; border: 1px solid #d3d8e1; display: flex; align-items: center; padding-left: 7px; line-height: 20px; font-size: 15px; }
.acct-input span { flex: 1; white-space: nowrap; }
.acct-drop { width: 18px; height: 20px; border-left: 1px solid #d3d8e1; display: flex; align-items: center; justify-content: center; }
.tb-title { flex: 1; text-align: center; line-height: 23px; color: #333; font-size: 15px; }
.tb-win { width: 183px; height: 27px; display: flex; align-items: center; }
.win-min { width: 12px; height: 1px; background: #999; margin-left: 37px; }
.win-max { width: 11px; height: 11px; border: 1px solid #888; margin-left: 36px; box-shadow: 2px -2px 0 -1px #fff, 2px -2px 0 0 #888; }
.win-close { width: 53px; height: 27px; background: #dd1f26; margin-left: 24px; display: flex; align-items: center; justify-content: center; }
.win-close svg { width: 12px; height: 12px; }

/* ribbon tabs */
.rtabs { height: 29px; background: #fff; display: flex; align-items: stretch; flex: none; }
.rtab { padding: 0 17.300px; line-height: 28px; color: #3b3f46; }
.rtab.active { background: #e3e8f2; border: 1px solid #d3d8e2; border-bottom: 0; line-height: 27px; padding: 0 16.300px; }
.oneclick { margin-left: auto; display: flex; align-items: center; height: 24px; margin-top: 2px; padding-right: 3px; }
.oneclick strong { font-weight: 600; color: #333; margin-right: 11px; font-size: 14.400px; }
.oc-btn { height: 23px; width: 48px; border: 1px solid #dde1e9; background: #e8ebf2; margin-right: 3px; line-height: 20px; }
.oc-off { background: #d14a4a; color: #fff; border-color: #dc7a7a; margin-right: 6px; }
.oc-mode { width: 119px; margin: 0; display: flex; align-items: center; gap: 12px; padding-left: 7px; white-space: nowrap; }
.oc-mode .caret { border-width: 3px; border-top-width: 4px; flex: none; }

/* ribbon */
.ribbon { height: 106px; flex: none; background: #e3e8f2; display: flex; border-bottom: 1px solid #c9cfdb; }
.rgroup { display: flex; flex-direction: column; border-right: 1px solid #ccd2dd; padding-top: 14px; }
.g1 { width: 98px; margin-left: 0; }
.g2 { width: 155px; }
.g3 { width: 76px; }
.rbtns { display: flex; flex: 1; }
.rbtn { display: flex; flex-direction: column; align-items: center; }
.rbtn span { line-height: 20px; white-space: nowrap; }
.ricon { width: 24px; height: 20px; }
.w50 { width: 50px; } .w48 { width: 48px; } .w77 { width: 77px; } .w78 { width: 78px; padding-left: 3px; } .w76 { width: 76px; }
.rbtn.sep { position: relative; }
.rbtn.sep::after { content: ""; position: absolute; right: 0; top: 15px; height: 22px; width: 1px; background: #d2d7e1; }
.rlabel { text-align: center; line-height: 20px; height: 20px; margin-bottom: 0; }

/* account bar */
.acct { height: 41px; flex: none; background: #e3e8f2; display: flex; align-items: stretch; border-top: 1px solid #d0d5df; border-bottom: 1px solid #ccd2dd; padding-top: 1px; }
.acell { display: flex; align-items: center; gap: 9px; padding: 0 0 0 8px; border-right: 1px solid #d1d6e0; margin: 3px 0 3px; white-space: nowrap; }
.acell b { font-weight: 600; color: #2a2d33; font-size: 14.500px; }
.c-usd { width: 70px; padding: 0 0 0 26px; }
.c-a, .c-b { width: 124px; }
.c-c { width: 118px; }
.c-icons { width: 64px; padding: 0 5px; gap: 5px; }
.c-d { width: 117px; }
.c-e { width: 154px; }
.c-f { width: auto; border: 0; }
.ghost-btn { width: 25px; height: 30px; background: #e9ecf3; border: 1px solid #dde1e9; display: flex; align-items: center; justify-content: center; color: #c8ccd5; }
.ghost-btn svg { width: 18px; height: 18px; }

/* main */
.main { height: 802px; flex: none; display: flex; background: #d9dee8; }
.col-left { width: 872px; margin: 0 6px 0 0; display: flex; flex-direction: column; padding-top: 5px; }
.watch { margin-left: 8px; height: 477px; flex: none; background: #f0f3f8; border-bottom: 3px solid #a9b0bd; border-left: 1px solid #a9b0bd; }
.watch-title { height: 27px; background: #34486c; color: #fff; display: flex; align-items: center; padding: 0 0 4px 6px; gap: 15px; }
.watch-title .dots { flex: 1; height: 9px; margin-right: 4px; }
.watch-tools { height: 42px; display: flex; align-items: center; padding: 0 0 0 7px; background: #e6ebf4; }
.search-btn { width: 104px; height: 26px; display: flex; align-items: center; gap: 3px; padding-left: 2px; background: #e9edf4; border: 1px solid #d4d9e2; white-space: nowrap; }
.search-btn svg { width: 19px; height: 19px; flex: none; }
.tool-sep { width: 1px; height: 26px; background: #c8ced9; margin: 0 6px 0 8px; }
.tool-label { width: 60px; white-space: nowrap; }
.tool-combo { width: 180px; height: 26px; background: #dfe3ec; border: 1px solid #d4d9e2; display: flex; align-items: center; justify-content: space-between; padding: 0 5px 0 4px; margin-right: 6px; }
.tool-ic { width: 28px; height: 26px; display: flex; align-items: center; justify-content: center; margin-right: 2px; background: #e3e7f0; border: 1px solid #d4d9e2; }
.tool-ic.off { background: none; border-color: #e1e5ed; }
.tool-ic svg { width: 20px; height: 20px; }

.grid-wrap { margin-left: 6px; background: #fff; border-left: 1px solid #a9b0bd; }
.ghead, .grow { display: grid; grid-template-columns: 28px 220px 96px 96px 50px 58px 30px 1fr; }
.ghead { height: 33px; background: #f4f5f7; font-weight: 600; color: #33363c; border-top: 1px solid #d5dae3; }
.ghead > div { display: flex; align-items: center; justify-content: center; border-right: 1px solid #dfe2e8; white-space: nowrap; }
.gh-x svg { width: 12px; height: 12px; color: #111; }
.gh-market { background: #3f94ef; color: #fff; position: relative; }
.sort { position: absolute; right: 4px; top: 9px; width: 0; height: 0; border: 3px solid transparent; border-bottom: 5px solid #fff; border-top: 0; }
.star { width: 15px; height: 15px; fill: #f8d52f; stroke: #d08f1c; stroke-width: 1.200px; display: block; }
.grow { height: 33.650px; background: #fff; border-bottom: 1px solid #dfe2e8; }
.grow:nth-child(even) { background: #e3e8f2; }
.grow > div { border-right: 1px solid #dfe2e8; }
.gx { display: flex; align-items: center; justify-content: center; border-left: 4px solid #c7dcf4; }
.xbox { width: 19px; height: 22px; background: #fff; border: 1px solid #e2e5eb; color: #b4b9c2; font-size: 14px; line-height: 20px; text-align: center; font-family: "DejaVu Sans", sans-serif; }
.gname { padding-left: 5px; line-height: 31px; font-size: 14px; white-space: nowrap; letter-spacing: .2px; color: #44484f; }
.gp { padding: 2px 3px 2px 3px; }
.price { display: flex; align-items: center; justify-content: flex-end; height: 100%; font-size: 14px; padding-right: 3px; }
.price em { width: 18px; text-align: center; color: #fff; font-size: 13px; font-family: "DejaVu Sans", sans-serif; margin-left: 3px; }
.price.gray { background: #9d9d9f; color: #3c3c3c; }
.price.up { background: #149000; color: #0e5410; }
.price.down { background: #d9534f; color: #7b2522; }
.gnum { text-align: right; padding-right: 4px; line-height: 32px; color: #44484f; white-space: nowrap; font-size: 14px; }
.gstar { display: flex; align-items: center; justify-content: center; }
.starbox { width: 20px; height: 23px; border: 1px solid #cfd4dd; background: #f1f3f7; display: flex; align-items: center; justify-content: center; }
.grow.row-sel { background: #3f94ef; }
.row-sel .gname { color: #e8f6ff; outline: 1px solid #12233f; outline-offset: -1px; margin: 1px 0; line-height: 29px; }
.row-sel .gnum { color: #d3ecff; }
.row-sel .gx { border-left-color: #3f94ef; }
.row-sel .price.up { color: #c7f5b3; }

.blank { flex: 1; background: #fff; margin-top: 6px; border-left: 1px solid #c5cbd6; }
.col-left .blank { margin: 2px 0 0 6px; }
.btabs { height: 32px; flex: none; background: #e3e8f2; display: flex; align-items: stretch; border-bottom: 2px solid #ccd2dd; margin-bottom: 0; }
.btab { line-height: 32px; padding: 0 5px; white-space: nowrap; }
.btab.active { color: #3c8db0; background: #eef1f7; padding: 0 4px 0 8px; }
.btab.first { padding-left: 2px; }
.btab + .btab { padding: 0 5px; margin-left: 6px; }
.col-left .btab:nth-child(2) { margin-left: 3px; }
.col-left .btab:nth-child(3) { margin-left: 2px; }
.col-left .btab:nth-child(4) { margin-left: 3px; }
.midpane .btab + .btab { margin-left: 5px; }
.col-left .btabs, .midpane .btabs { margin-bottom: 2px; }

.col-right { width: 845px; display: flex; flex-direction: column; padding-top: 5px; }
.ctabs { height: 22px; display: flex; gap: 7px; flex: none; }
.ctab { background: #eef1f6; display: flex; align-items: center; overflow: hidden; height: 22px; padding-top: 6px; }
.ctab .dots { height: 9px; }
.ctab .caret { border-top-color: #555; margin-left: 14px; flex: none; }
.ct1 { width: 420px; }
.ct1 .dots { flex: 1; margin-right: 20px; }
.ct2 { width: 418px; }
.ct2 span { padding-left: 4px; font-size: 16px; letter-spacing: .4px; line-height: 22px; height: 22px; white-space: nowrap; width: 170px; color: #555; flex: none; margin-top: 4px; }
.ct2 .dots { flex: 1; }
.pin { width: 11px; height: 13px; margin-left: 12px; flex: none; fill: #666; }
.cx { width: 11px; height: 11px; margin: 0 6px 0 12px; flex: none; color: #666; }
.chartwin { height: 470px; flex: none; display: flex; flex-direction: column; background: #e3e8f2; border-right: 1px solid #ccd2dd; }
.cw-title { height: 26px; display: flex; align-items: center; background: #e6ebf4; flex: none; }
.cw-title .dots { flex: 1; height: 9px; margin-right: 14px; }
.chart-a { width: 600px; height: 379px; display: block; align-self: flex-end; flex: none; }
.axis { font-family: "Noto Sans", "Noto Sans CJK SC", sans-serif; font-size: 13px; fill: #565a60; }
.axis-tag { font-family: "Noto Sans", sans-serif; font-size: 13px; fill: #fbe6cf; }
.ctool { height: 36px; flex: none; display: flex; align-items: center; background: #e3e8f2; border-top: 1px solid #d5dae3; border-bottom: 1px solid #ccd2dd; color: #4a4e55; position: relative; white-space: nowrap; }
.ctool.top { padding-left: 251px; }
.ctool .caret { margin-left: 8px; flex: none; border-width: 3.500px; border-top-width: 5px; }
.ml16 { margin-left: 16px; }
.ml15 { margin-left: 14px; }
.ml19 { margin-left: 19px; }
.latin { letter-spacing: .4px; }
.cs { width: 1px; height: 28px; background: #d0d5df; margin: 0 7px 0 11px; flex: none; }
.tlink { width: 22px; height: 22px; color: #111; flex: none; margin-left: 3px; margin-right: 3px; }
.tico { width: 20px; height: 20px; margin-left: 9px; flex: none; color: #222; fill: #222; }
.tico.first { margin-left: 15.500px; }
.s2 { margin: 0 3px 0 6px; }
.s3 { margin-left: 7px; }
.s4 { margin-left: 11px; }
.s5 { margin-right: 11px; }
.cstatus { height: 29px; flex: none; text-align: right; padding-right: 6px; line-height: 27px; color: #555a62; font-size: 14px; letter-spacing: .45px; background: #e3e8f2; white-space: nowrap; }
.bottom-row { flex: 1; display: flex; gap: 5px; }
.midpane { width: 422px; display: flex; flex-direction: column; }
.audpane { width: 418px; display: flex; flex-direction: column; padding-top: 6px; }
.chart-b { width: 418px; height: 229px; display: block; flex: none; }
.ctool.aud { padding-left: 4px; }
.candle { width: 8px; height: 18px; margin-left: 18px; flex: none; }
.candle + .caret { margin-left: 16px; }
.more { position: absolute; right: 4px; bottom: 5px; width: 0; height: 0; border: 4px solid transparent; border-top: 5px solid #777; border-bottom: 0; box-shadow: 0 -2px 0 -1px #777; }
.aud-status { height: 29px; flex: none; display: flex; align-items: center; justify-content: space-between; padding-right: 4px; background: #e3e8f2; color: #555a62; border-bottom: 1px solid #ccd2dd; font-size: 14px; letter-spacing: .45px; white-space: nowrap; }
.scroll { width: 238px; height: 25px; background: #f0f3f8; position: relative; display: flex; align-items: center; padding-left: 12px; }
.sl, .sr { width: 0; height: 0; border: 5px solid transparent; flex: none; }
.sl { border-right: 6px solid #555; border-left: 0; }
.sr { border-left: 6px solid #555; border-right: 0; margin-left: 5px; }
.thumb { width: 19px; height: 10px; background: #c5c9d2; margin-left: 183px; flex: none; }

/* status */
.status { height: 25px; flex: none; background: #eef1f7; display: flex; align-items: center; padding: 0 4px 0 5px; color: #4c5058; border-top: 1px solid #d5dae3; }
.led { width: 14px; height: 14px; border-radius: 50%; background: radial-gradient(circle at 50% 35%, #7fe25c, #1fa51a 70%); flex: none; }
.ver { margin-left: 7px; }
.tz { margin-left: auto; white-space: nowrap; letter-spacing: .25px; }
.speaker { width: 20px; height: 16px; margin-left: 7px; flex: none; }

/* taskbar */
.taskbar { height: 48px; flex: none; background: #0a0d14; display: flex; align-items: center; color: #fff; }
.tk { width: 57.500px; display: flex; align-items: center; justify-content: center; height: 48px; }
.tk svg { width: 20px; height: 20px; }
.tk-r { margin-right: 4px; }
.tk-app { width: 48px; height: 48px; margin: 0 5.500px; border-bottom: 2px solid #77aadb; display: flex; align-items: center; justify-content: center; flex: none; }
.tk-app svg { width: 28px; height: 28px; }
.tk-app.active { width: 58px; margin: 0; margin-left: 1px; background: #32363c; }
.tray { margin-left: auto; display: flex; align-items: center; height: 48px; padding-right: 18px; }
.tr { display: flex; align-items: center; justify-content: center; height: 48px; }
.t1 { width: 28px; } .t1 svg { width: 15px; height: 10px; }
.t2 { width: 30px; } .t2 svg { width: 20px; height: 12px; }
.t3 { width: 29px; } .t3 svg { width: 16px; height: 16px; }
.t4 { width: 27px; } .t4 svg { width: 20px; height: 18px; }
.t5 { width: 30px; font-size: 16px; }
.t6 { width: 38px; }
.t6 b { font-weight: 400; font-size: 14px; width: 17px; height: 17px; line-height: 17px; background: #eee; color: #222; text-align: center; display: block; }
.clock { width: 92px; flex-direction: column; font-weight: 600; font-size: 14px; line-height: 22px; gap: 0; }
.t7 { width: 44px; } .t7 svg { width: 20px; height: 20px; }

/* dialog */
.dialog { position: absolute; left: 602px; top: 193px; width: 524px; height: 644px; background: #e3e8f2; border-right: 2px solid #cdd3de; box-shadow: 0 1px 3px rgba(60, 70, 90, .5); display: flex; flex-direction: column; }
.d-head { height: 33px; flex: none; background: #34486c; color: #fff; display: flex; align-items: center; justify-content: space-between; padding: 0 12px 0 8px; }
.d-close { width: 13px; height: 13px; }
.d-symbol { height: 44px; flex: none; position: relative; text-align: center; padding-top: 11px; line-height: 30px; }
.d-symbol strong { font-size: 20.500px; font-weight: 600; color: #23262b; }
.d-info { position: absolute; right: 17px; top: 11px; width: 22px; height: 22px; border-radius: 50%; background: #eef1f6; border: 1px solid #dde1e8; text-align: center; line-height: 20px; font-weight: 700; font-family: "DejaVu Sans", sans-serif; font-size: 14px; color: #222; }
.d-prices { height: 44px; flex: none; display: flex; justify-content: center; gap: 10px; }
.d-price { width: 216px; background: #1a9300; color: #d8f5cc; font-size: 25px; line-height: 42px; text-align: center; white-space: nowrap; }
.d-price b { font-size: 30px; font-weight: 700; color: #f4fff0; line-height: 1; }
.d-price em { font-family: "DejaVu Sans", sans-serif; color: #e9ffe0; font-size: 22px; }
.d-type { height: 39px; flex: none; margin-top: 11px; display: flex; align-items: center; padding: 5px 0 0 6px; border-top: 1px solid #d8dde6; border-bottom: 1px solid #d8dde6; }
label { width: 65px; flex: none; white-space: nowrap; color: #3b3f46; }
.sel { width: 119px; height: 25px; background: #e4e8f0; border: 1px solid #d4d9e2; display: flex; align-items: center; justify-content: space-between; padding: 0 6px 2px 3px; flex: none; }
.sel.hot { background: #fbe7a6; border-color: #e8d9a0; }
.d-form { padding: 3px 0 3px 6px; display: flex; flex-direction: column; gap: 5px; height: 122px; flex: none; border-bottom: 1px solid #d2d7e1; }
.frow { display: flex; align-items: center; height: 25px; }
.chk { width: 16px; height: 16px; background: #e5e9f1; border: 1px solid #d3d8e1; display: inline-block; flex: none; }
.ml8 { margin-left: 5px; }
.hedge { margin-left: 8px; }
.info-s { margin-left: 10px; width: 17px; height: 17px; border-radius: 50%; background: #c7ccd5; color: #222; font-size: 11px; font-weight: 700; font-style: italic; line-height: 17px; text-align: center; font-family: "DejaVu Serif", serif; }
.redbox { width: 119px; height: 25px; background: #f72800; display: flex; flex-direction: column; align-items: flex-end; justify-content: space-around; padding: 3px 5px; flex: none; }
.redbox .caret { border-top-color: #c9593a; border-bottom-color: #c9593a; }
.lim { height: 26px; background: #e4e8f0; border: 1px solid #d6dae3; font-size: 13.200px; line-height: 24px; text-align: center; white-space: nowrap; flex: none; color: #4a4e55; }
.ml7 { margin-left: 7px; } .ml6 { margin-left: 6px; }
.w82 { width: 82px; } .w84 { width: 84px; }
.amount { width: 119px; height: 26px; display: flex; align-items: center; background: #fff; flex: none; position: relative; }
.amount .val { width: 77px; text-align: right; }
.spn { width: 22px; display: flex; flex-direction: column; align-items: center; gap: 5px; margin-left: 0; }
.spn .caret { border-left-width: 3.500px; border-right-width: 3.500px; }
.drop { width: 19px; height: 100%; background: #e4e8f0; border: 1px solid #d6dae3; display: flex; align-items: center; justify-content: center; margin-left: auto; }
.d-sl { height: 38px; flex: none; display: flex; align-items: center; padding: 0 5px 4px 6px; }
.circle { width: 26px; height: 26px; border-radius: 50%; background: #eef1f6; border: 2px solid #d9dde5; display: flex; align-items: center; justify-content: center; }
.sl-txt { margin-left: 7px; }
.remove { margin-left: auto; width: 62px; height: 23px; background: #e9ecf3; border: 1px solid #e2e6ed; color: #c4c8d0; font-size: 13.500px; text-align: center; line-height: 20px; white-space: nowrap; overflow: hidden; }
.d-tabs { height: 33px; flex: none; padding-left: 4px; }
.d-tab { width: 139px; height: 33px; background: #1e73c6; color: #eaf4ff; display: flex; align-items: center; padding-left: 15px; }
.d-tab span { flex: 1; }
.d-tab b { width: 20px; height: 19px; background: #e7ebf2; color: #111; margin-right: 15px; font-weight: 400; text-align: center; line-height: 17px; font-size: 13px; }
.d-panel { margin: 0 4px; height: 205px; flex: none; background: #fff; border: 1px solid #1e73c6; padding: 5px 0 0 0; display: grid; grid-template-columns: 97px 120px 89px 119px 81px; grid-auto-rows: 26px; grid-template-rows: 16px 16px; row-gap: 5px; align-items: center; }
.pc1 { grid-column: 1; } .pc2 { grid-column: 2; } .pc3 { grid-column: 3; } .pc4 { grid-column: 4; } .pc5 { grid-column: 5; }
.ck { display: flex; align-items: center; gap: 8px; line-height: 16px; }
.ck.off { color: #c9cdd5; }
.ck.off .chk { background: #eef0f4; border-color: #e5e7ec; }
.indent { padding-left: 18px; }
.rd { display: flex; align-items: center; gap: 7px; padding: 5px 0 0 4px; white-space: nowrap; }
.rd.off { color: #cfd2d8; }
.rd.plain { padding-left: 6px; padding-top: 0; }
.radio { width: 15px; height: 15px; border-radius: 50%; border: 1px solid #dfe2e7; background: #f3f4f6; flex: none; position: relative; }
.radio.on::after { content: ""; position: absolute; left: 3px; top: 3px; width: 7px; height: 7px; border-radius: 50%; background: #cfd2d8; }
.inp { height: 26px; width: 119px; border: 1px solid #e2e5eb; position: relative; }
.inp .caret { position: absolute; right: 5px; top: 5px; border-top-color: #d0d3da; border-left-width: 3.500px; border-right-width: 3.500px; }
.inp .caret.up-t { top: 4px; border-bottom-color: #d0d3da; }
.inp .caret:not(.up-t) { top: auto; bottom: 5px; }
.inp.amt { display: flex; align-items: center; }
.inp.amt > span { width: 77px; text-align: right; color: #ccd0d7; }
.inp.amt > .caret { right: 24px; }
.inp.amt .drop { position: absolute; right: 0; top: 0; background: #eef0f4; border: 0; border-left: 1px solid #e2e5eb; height: 24px; width: 17px; }
.inp.amt .drop .caret { position: static; }
.inp.dsel { background: #eceef2; color: #c5c8cf; display: flex; align-items: center; padding-left: 4px; }
.inp.dsel .caret { right: 8px; top: 10px; bottom: auto; }
.dis-btn { margin-left: 6px; width: 74px; height: 26px; background: #eceef2; border: 1px solid #e5e7ec; color: #cdd0d6; font-size: 12.500px; line-height: 24px; text-align: center; white-space: nowrap; overflow: hidden; }
.d-totals { height: 20px; flex: none; margin-top: 3px; padding-left: 101px; display: flex; line-height: 20px; }
.d-totals span { width: 210px; }
.d-foot { flex: 1; display: flex; align-items: flex-start; padding: 12px 5px 0 4px; }
.linkbtn { width: 29px; height: 31px; background: #e4e8f0; border: 1px solid #d2d7e0; display: flex; align-items: center; justify-content: center; color: #111; margin-right: auto; }
.linkbtn svg { width: 22px; height: 22px; }
.fbtn { width: 83px; height: 32px; background: #e4e8f0; border: 1px solid #d2d7e0; margin-left: 15px; }
.fbtn.dis { width: 80px; background: #e9ecf3; border-color: #e6e9ef; color: #c5c9d1; }

.cursor { position: absolute; left: 761px; top: 349px; width: 16px; height: 24px; }
.mark { position: absolute; right: 0; top: 45px; width: 36px; height: 92px; }
.mark svg { width: 36px; height: 90px; display: block; }
.mark span { position: absolute; left: -12px; top: 107px; font-size: 46px; line-height: 1; color: #fff; font-weight: 600; white-space: nowrap; }
```
